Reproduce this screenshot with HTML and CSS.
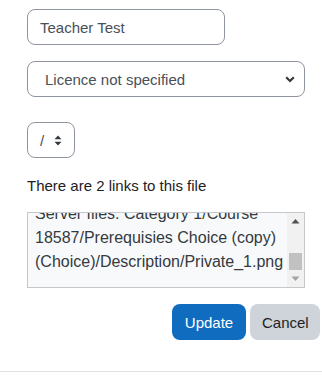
FILE: index.html
```html
<!DOCTYPE html>
<html>
<head>
<meta charset="utf-8">
<link rel="stylesheet" href="styles.css">
</head>
<body>
<div class="form">
  <div class="control name">Teacher Test</div>
  <div class="control licence">
    <span>Licence not specified</span>
    <svg class="chev" width="10" height="7" viewBox="0 0 10 7"><path d="M1.2 1.3 L5 5 L8.8 1.3" fill="none" stroke="#343a40" stroke-width="2.2"/></svg>
  </div>
  <div class="control path">
    <span>/</span>
    <svg class="updown" width="8" height="11" viewBox="0 0 8 11"><path d="M4 0.5 L7.5 4.2 H0.5 Z M4 10.5 L7.5 6.8 H0.5 Z" fill="#343a40"/></svg>
  </div>
  <p class="links">There are 2 links to this file</p>
  <div class="refs">
    <div class="refs-text">
      <div class="refs-inner">Server files: Category 1/Course 18587/Prerequisies Choice/Description/Private_1.png<br>Server files: Category 1/Course 18587/Prerequisies Choice (copy) (Choice)/Description/Private_1.png</div>
    </div>
    <div class="scrollbar">
      <svg class="arrow" width="17" height="17" viewBox="0 0 17 17"><path d="M4.5 10.5 L8.5 6 L12.5 10.5 Z" fill="#505050"/></svg>
      <div class="track"><div class="thumb"></div></div>
      <svg class="arrow" width="17" height="17" viewBox="0 0 17 17"><path d="M4.5 6.5 L8.5 11 L12.5 6.5 Z" fill="#a3a3a3"/></svg>
    </div>
  </div>
  <div class="actions">
    <button class="btn primary">Update</button>
    <button class="btn secondary">Cancel</button>
  </div>
</div>
<div class="rule"></div>
</body>
</html>
```

FILE: styles.css
```css
html, body {
  margin: 0;
  padding: 0;
  background: #fff;
}
body {
  font-family: "Liberation Sans", Arial, sans-serif;
  font-size: 15px;
  color: #1d2125;
  width: 322px;
  height: 375px;
  overflow: hidden;
}
.form {
  padding: 9px 0 0 27px;
}
.control {
  box-sizing: border-box;
  height: 36px;
  border: 1px solid #8f959e;
  border-radius: 8px;
  display: flex;
  align-items: center;
  color: #495057;
}
.name {
  width: 198px;
  padding-left: 12px;
  margin-bottom: 16px;
}
.licence {
  width: 278px;
  padding: 0 9px 0 17px;
  justify-content: space-between;
  margin-bottom: 25px;
}
.path {
  width: 48px;
  padding-left: 12px;
  gap: 10px;
}
.links {
  margin: 17px 0 15px;
  line-height: 22px;
}
.refs {
  box-sizing: border-box;
  width: 278px;
  height: 76px;
  border: 1px solid #c4c8cc;
  background: #f8f9fa;
  display: flex;
}
.refs-text {
  flex: 1;
  overflow: hidden;
  padding: 0 4px 0 7px;
}
.refs-inner {
  font-size: 16px;
  line-height: 24px;
  margin-top: -83px;
  color: #343a40;
}
.scrollbar {
  width: 17px;
  background: #f1f1f1;
  display: flex;
  flex-direction: column;
}
.arrow {
  display: block;
  flex: none;
}
.track {
  flex: 1;
  display: flex;
  flex-direction: column;
  justify-content: flex-end;
  padding: 0 2px;
}
.thumb {
  height: 17px;
  background: #c1c1c1;
}
.actions {
  display: flex;
  justify-content: flex-end;
  gap: 4px;
  margin-top: 16px;
  margin-right: 2px;
}
.btn {
  height: 36px;
  border: none;
  border-radius: 8px;
  font-family: "Liberation Sans", Arial, sans-serif;
  font-size: 15px;
  padding: 0 12px;
}
.primary {
  width: 74px;
  background: #0f6cbf;
  color: #fff;
}
.secondary {
  width: 70px;
  background: #ced4da;
  color: #1d2125;
}
.rule {
  margin-top: 31px;
  height: 1px;
  background: #dee2e6;
}
```
